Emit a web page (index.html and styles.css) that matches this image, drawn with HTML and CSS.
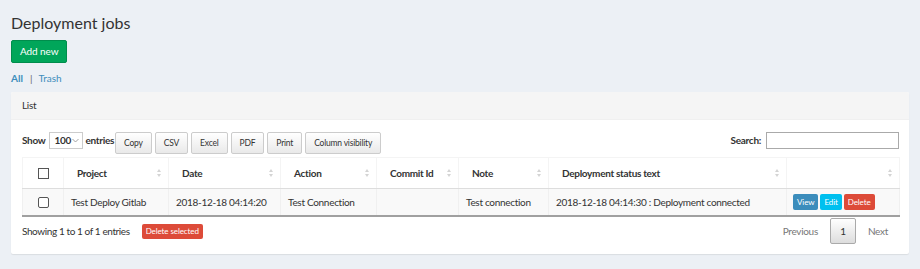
FILE: index.html
```html
<!DOCTYPE html>
<html>
<head>
<meta charset="utf-8">
<link rel="stylesheet" href="styles.css">
</head>
<body>
<div class="page">
  <h1 class="title">Deployment jobs</h1>
  <div class="add-row"><a class="btn btn-success">Add new</a></div>
  <div class="filters"><a class="link active">All</a><span class="sep">|</span><a class="link">Trash</a></div>
  <div class="box">
    <div class="box-header">List</div>
    <div class="box-body">
      <div class="controls">
        <div class="left-controls">
          <label class="len">Show <span class="select">100<svg class="caret" width="7" height="5" viewBox="0 0 7 5"><path d="M0.5 1 L3.5 4 L6.5 1" fill="none" stroke="#999" stroke-width="0.9"/></svg></span> entries</label>
          <div class="dt-buttons">
            <button class="dt-btn">Copy</button>
            <button class="dt-btn">CSV</button>
            <button class="dt-btn">Excel</button>
            <button class="dt-btn">PDF</button>
            <button class="dt-btn">Print</button>
            <button class="dt-btn">Column visibility</button>
          </div>
        </div>
        <label class="search">Search: <span class="search-input"></span></label>
      </div>
      <table class="grid">
        <colgroup>
          <col class="c-check"><col class="c-project"><col class="c-date"><col class="c-action"><col class="c-commit"><col class="c-note"><col class="c-status"><col class="c-btns">
        </colgroup>
        <thead>
          <tr>
            <th class="chk"><span class="cb sq"></span></th>
            <th class="sort">Project</th>
            <th class="sort">Date</th>
            <th class="sort">Action</th>
            <th class="sort">Commit Id</th>
            <th class="sort">Note</th>
            <th class="sort">Deployment status text</th>
            <th class="sort"></th>
          </tr>
        </thead>
        <tbody>
          <tr>
            <td class="chk"><span class="cb round"></span></td>
            <td>Test Deploy Gitlab</td>
            <td>2018-12-18 04:14:20</td>
            <td>Test Connection</td>
            <td></td>
            <td>Test connection</td>
            <td>2018-12-18 04:14:30 : Deployment connected</td>
            <td class="acts"><span class="xs view">View</span><span class="xs edit">Edit</span><span class="xs del">Delete</span></td>
          </tr>
        </tbody>
      </table>
      <div class="footer">
        <div class="info">Showing 1 to 1 of 1 entries <span class="xs del big">Delete selected</span></div>
        <div class="paging"><span class="pg">Previous</span><span class="pg cur">1</span><span class="pg">Next</span></div>
      </div>
    </div>
  </div>
</div>
</body>
</html>
```
FILE: styles.css
```css
html, body { margin: 0; padding: 0; }
body {
  background: #ecf0f5;
  font-family: Lato, "Open Sans", sans-serif;
  font-size: 10px;
  letter-spacing: -0.3px;
  color: #333;
  width: 920px;
  height: 269px;
  overflow: hidden;
}
.page { padding: 0 11px; }
.title {
  font-weight: 400;
  font-size: 16px;
  letter-spacing: 0;
  line-height: 20px;
  margin: 0;
  padding-top: 13px;
  color: #333;
}
.add-row { margin-top: 7px; height: 23px; }
.btn {
  display: inline-block;
  height: 23px;
  padding: 0 8px;
  border-radius: 2px;
  font-size: 10px;
  letter-spacing: -0.1px;
  box-sizing: border-box;
}
.btn-success { background: #00a65a; color: #fff; border: 1px solid #008d4c; line-height: 21px; }
.filters { margin-top: 8px; height: 14px; line-height: 14px; font-size: 10px; letter-spacing: 0; }
.link { color: #3c8dbc; }
.link.active { font-weight: 700; }
.sep { color: #666; margin: 0 6px 0 7px; }
.box {
  margin-top: 7px;
  background: #fff;
  border-radius: 2px;
  box-shadow: 0 1px 1px rgba(0,0,0,0.08);
  height: 162px;
}
.box-header {
  background: #f5f5f5;
  height: 28px;
  line-height: 27px;
  padding: 0 11px;
  border-bottom: 1px solid #f0f0f0;
  box-sizing: border-box;
  border-radius: 2px 2px 0 0;
}
.box-body { padding: 11px 10px 0 11px; }
.controls {
  display: flex;
  justify-content: space-between;
  align-items: flex-start;
  height: 26px;
}
.left-controls { display: flex; align-items: flex-start; }
.len { font-weight: 700; display: flex; align-items: center; height: 18px; }
.select {
  display: inline-flex;
  align-items: center;
  justify-content: space-between;
  width: 34px;
  height: 17px;
  box-sizing: border-box;
  border: 1px solid #ccc;
  padding: 0 3px 0 5px;
  margin: 0 3px 0 3px;
  font-weight: 700;
  background: #fff;
}
.dt-buttons { display: flex; gap: 3px; margin-top: 1px; margin-left: 1px; }
.dt-btn {
  font-family: inherit;
  font-size: 8.5px;
  letter-spacing: -0.2px;
  height: 22px;
  padding: 0 8px;
  border: 1px solid #ccc;
  border-radius: 2px;
  background: linear-gradient(#fff, #e9e9e9);
  color: #333;
  margin: 0;
}
.search { font-weight: 700; display: flex; align-items: center; height: 18px; }
.search-input {
  display: inline-block;
  width: 133px;
  height: 17px;
  box-sizing: border-box;
  border: 1px solid #aaa;
  margin-left: 5px;
  background: #fff;
}
.grid {
  width: 877px;
  border-collapse: collapse;
  table-layout: fixed;
}
.c-check { width: 41px; }
.c-project { width: 105px; }
.c-date { width: 112px; }
.c-action { width: 96px; }
.c-commit { width: 82px; }
.c-note { width: 90px; }
.c-status { width: 238px; }
.c-btns { width: 113px; }
.grid th {
  text-align: left;
  font-weight: 700;
  height: 30px;
  padding: 0 13px;
  border: 1px solid #f4f4f4;
  border-bottom: 1px solid #ddd;
  position: relative;
  white-space: nowrap;
}
.grid th.sort::before,
.grid th.sort::after {
  content: "";
  position: absolute;
  right: 7px;
  width: 0;
  height: 0;
  border-left: 2.5px solid transparent;
  border-right: 2.5px solid transparent;
}
.grid th.sort::before { top: 11px; border-bottom: 3.5px solid #d4d4d4; }
.grid th.sort::after { top: 15.5px; border-top: 3.5px solid #d4d4d4; }
.grid td {
  background: #f9f9f9;
  height: 26px;
  padding: 0 7px;
  border-left: 1px solid #f0f0f0;
  border-right: 1px solid #f0f0f0;
  border-bottom: 2px solid #a0a0a0;
  white-space: nowrap;
}
.grid .chk { text-align: center; padding: 0; }
.cb {
  display: inline-block;
  width: 9px;
  height: 9px;
  border: 1px solid #555;
  background: #fff;
  vertical-align: middle;
}
.cb.round { border-radius: 2px; }
.grid td.acts { padding: 0 6px; }
.xs {
  display: inline-block;
  color: #fff;
  font-size: 8px;
  letter-spacing: -0.1px;
  height: 16px;
  line-height: 16px;
  padding: 0 4px;
  border-radius: 2px;
  margin-right: 2px;
  vertical-align: middle;
}
.view { background: #3c8dbc; }
.edit { background: #00c0ef; }
.del { background: #dd4b39; }
.footer {
  display: flex;
  justify-content: space-between;
  align-items: center;
  margin-top: 0;
  height: 28px;
}
.info { display: flex; align-items: center; letter-spacing: -0.4px; }
.big { margin-left: 12px; padding: 0 4px; height: 15px; line-height: 15px; letter-spacing: -0.1px; }
.paging { display: flex; align-items: center; color: #777; }
.pg { padding: 0 11px; }
.pg.cur {
  border: 1px solid #aaa;
  background: linear-gradient(#fff, #ddd);
  color: #333;
  width: 26px;
  height: 26px;
  line-height: 24px;
  text-align: center;
  box-sizing: border-box;
  padding: 0;
  border-radius: 2px;
  margin: 0 1px;
}
```
